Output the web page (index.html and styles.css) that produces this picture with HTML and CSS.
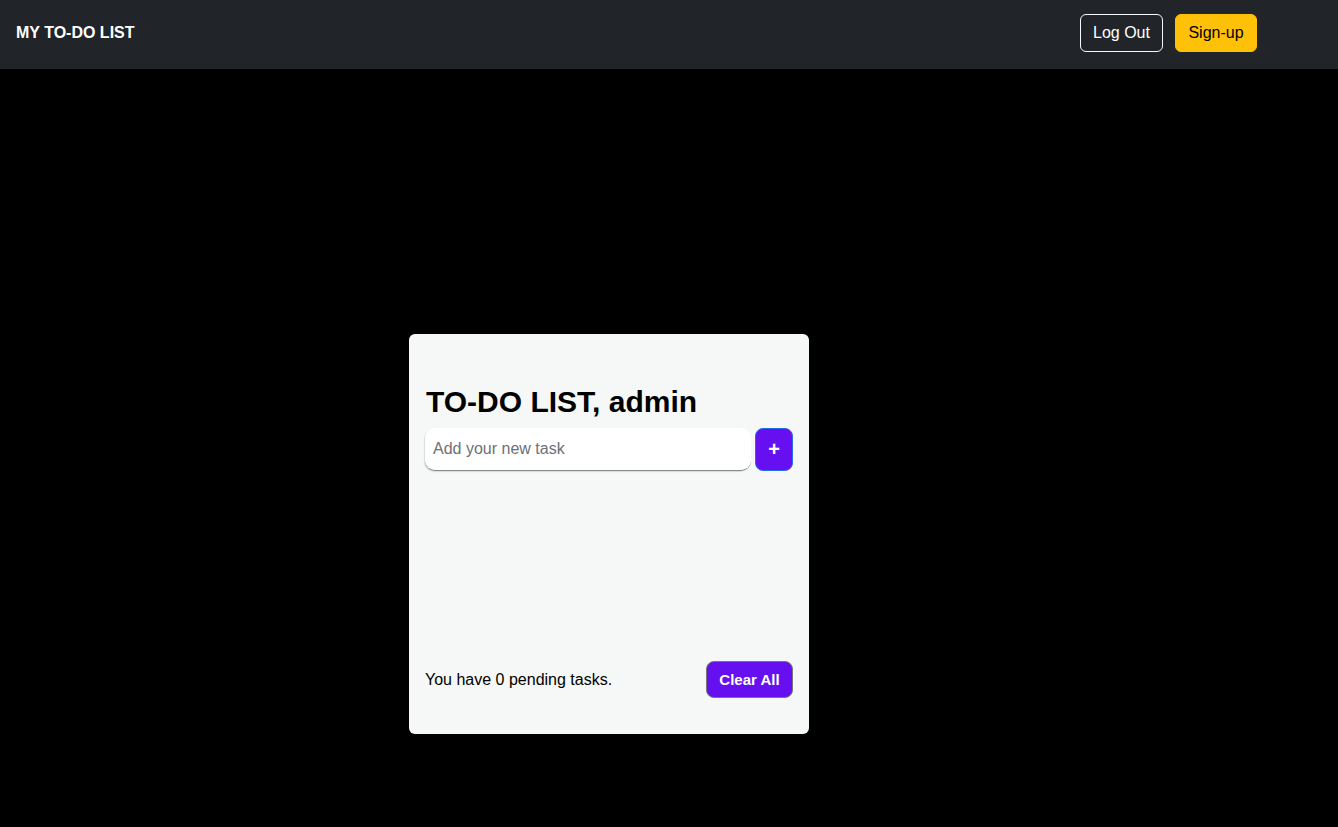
FILE: index.html
```html
<!DOCTYPE html>
<html>
<head>
<meta charset="utf-8">
<link rel="stylesheet" href="styles.css">
</head>
<body>
<nav class="navbar">
  <div class="brand">MY TO-DO LIST</div>
  <div class="nav-actions">
    <button class="btn btn-outline">Log Out</button>
    <button class="btn btn-warning">Sign-up</button>
  </div>
</nav>
<main class="main">
  <div class="card">
    <h1 class="title">TO-DO LIST, admin</h1>
    <div class="input-row">
      <input class="task-input" type="text" placeholder="Add your new task">
      <button class="add-btn">+</button>
    </div>
    <ul class="todo-list"></ul>
    <div class="footer">
      <span class="pending">You have 0 pending tasks.</span>
      <button class="clear-btn">Clear All</button>
    </div>
  </div>
</main>
</body>
</html>
```
FILE: styles.css
```css
* { box-sizing: border-box; }
html, body { margin: 0; padding: 0; }
body {
  background: #000;
  font-family: "Liberation Sans", Arial, sans-serif;
  width: 1338px;
  height: 827px;
  overflow: hidden;
}
.navbar {
  height: 69px;
  background: #212529;
  display: flex;
  align-items: center;
  justify-content: space-between;
  padding: 0 81px 0 16px;
}
.brand {
  color: #fff;
  font-weight: bold;
  font-size: 16px;
  margin-top: -4px;
}
.nav-actions {
  display: flex;
  gap: 12px;
  margin-top: -4px;
}
.btn {
  font-family: "Liberation Sans", Arial, sans-serif;
  font-size: 16px;
  height: 38px;
  padding: 0 12px;
  border-radius: 6px;
  cursor: pointer;
}
.btn-outline {
  background: transparent;
  color: #fff;
  border: 1px solid #f8f9fa;
  width: 83px;
}
.btn-warning {
  background: #ffc107;
  color: #000;
  border: 1px solid #ffc107;
  width: 82px;
}
.main {
  display: flex;
  justify-content: flex-start;
  padding-left: 409px;
  padding-top: 265px;
}
.card {
  width: 400px;
  height: 400px;
  background: #f6f8f7;
  border-radius: 6px;
  padding: 49px 16px 0 16px;
  display: flex;
  flex-direction: column;
}
.title {
  margin: 0 0 8px 1px;
  font-size: 30px;
  font-weight: bold;
  line-height: 37px;
  color: #000;
}
.input-row {
  display: flex;
  gap: 4px;
  height: 43px;
}
.task-input {
  flex: 1;
  height: 43px;
  border: none;
  border-bottom: 1px solid #8a8a8a;
  border-radius: 10px;
  background: #fff;
  padding: 0 8px;
  font-family: "Liberation Sans", Arial, sans-serif;
  font-size: 16px;
  color: #000;
  outline: none;
  box-shadow: -1px 1px 1px rgba(0,0,0,0.12);
}
.task-input::placeholder { color: #6c6f78; }
.add-btn {
  width: 38px;
  height: 43px;
  background: #6610f2;
  border: 1px solid #2a6ae8;
  border-radius: 8px;
  color: #fff;
  font-size: 20px;
  font-weight: bold;
  font-family: "Liberation Sans", Arial, sans-serif;
  padding: 0;
  cursor: pointer;
}
.todo-list {
  list-style: none;
  margin: 0;
  padding: 0;
  height: 190px;
}
.footer {
  display: flex;
  align-items: center;
  justify-content: space-between;
}
.pending {
  font-size: 16px;
  color: #000;
}
.clear-btn {
  width: 87px;
  height: 37px;
  background: #6610f2;
  border: 1px solid #777;
  border-radius: 8px;
  color: #fff;
  font-weight: bold;
  font-size: 15px;
  font-family: "Liberation Sans", Arial, sans-serif;
  padding: 0;
  cursor: pointer;
}
```
